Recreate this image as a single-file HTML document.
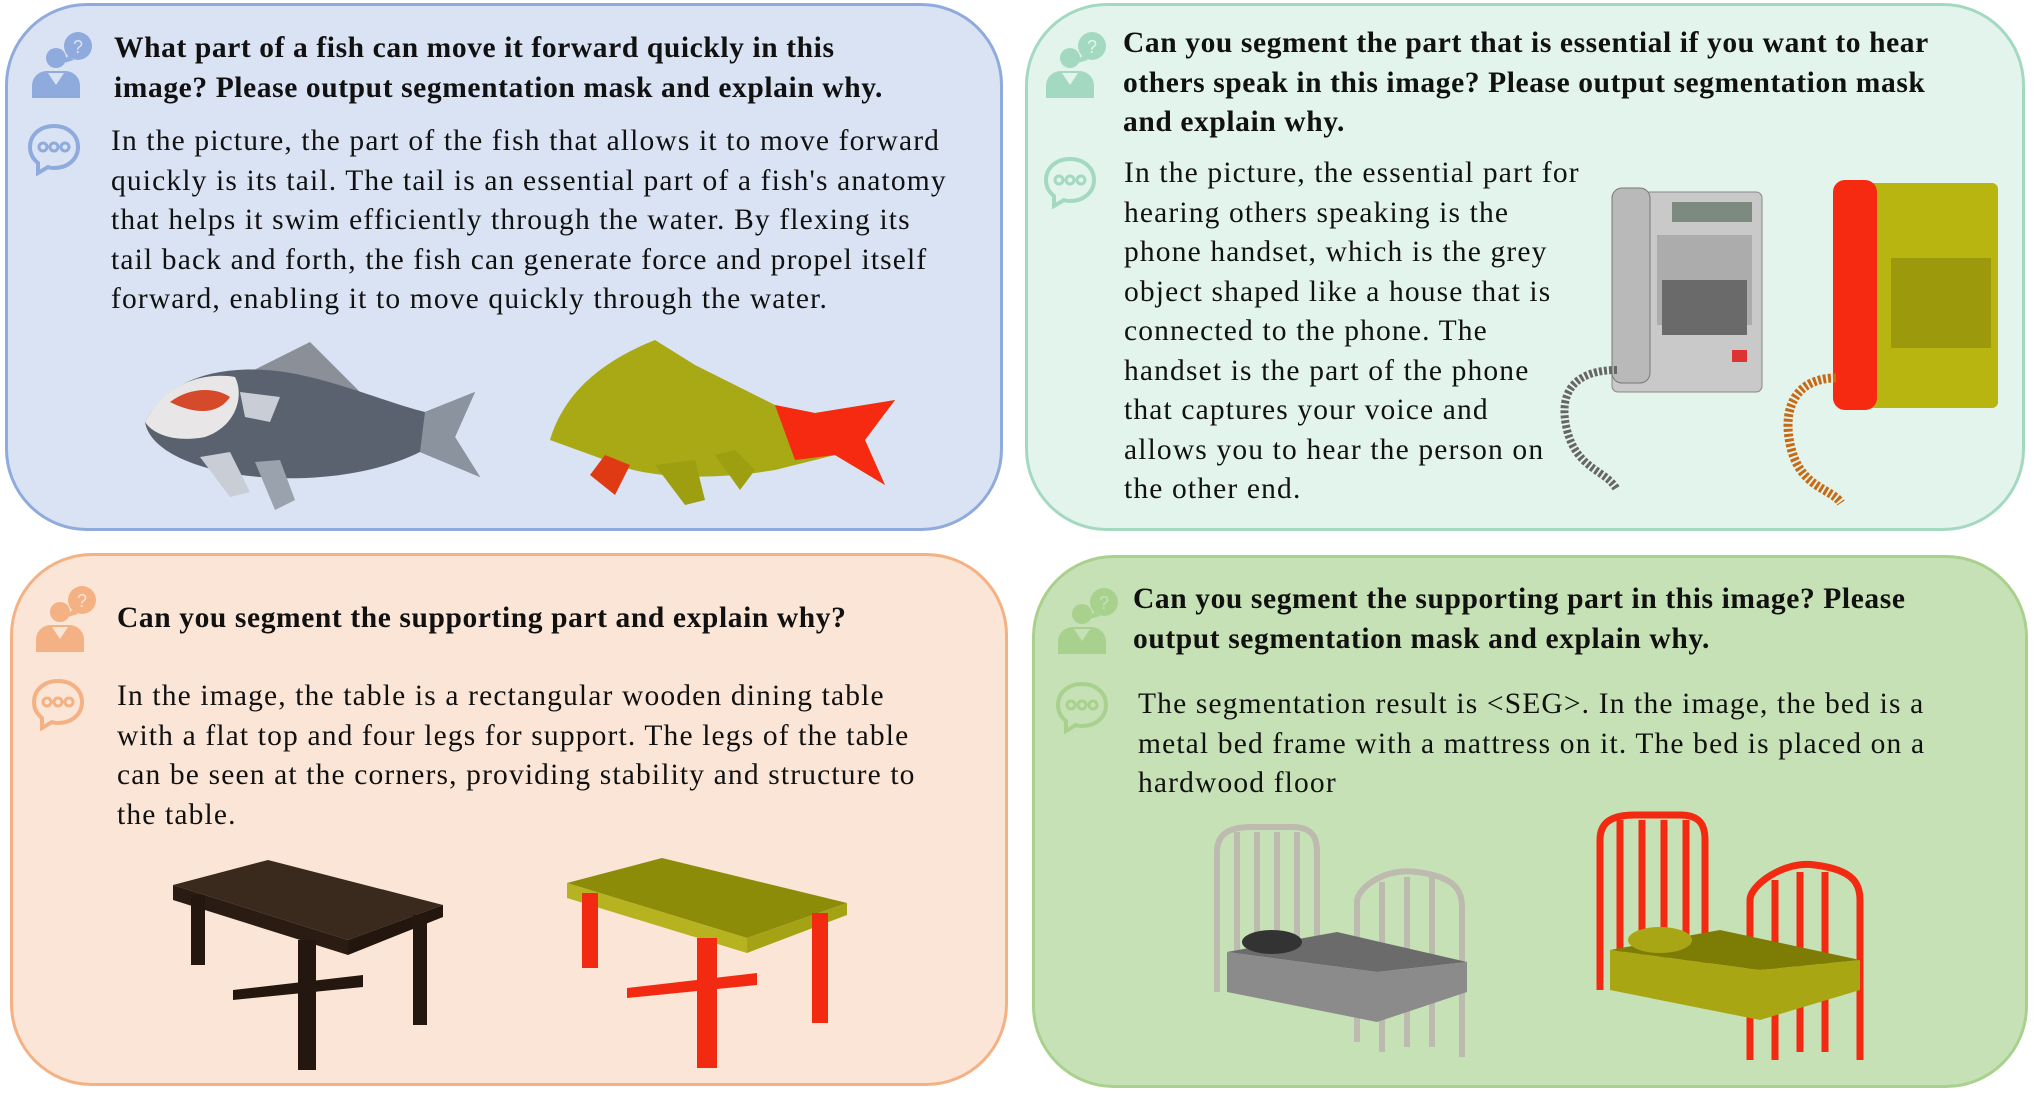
<!DOCTYPE html>
<html><head><meta charset="utf-8"><style>
*{margin:0;padding:0;box-sizing:border-box}
body{width:2035px;height:1093px;background:#fff;position:relative;overflow:hidden;font-family:"Liberation Serif","Times New Roman",serif;color:#111}
.p{position:absolute;border-radius:82px;border:3px solid}
.t{position:absolute;white-space:nowrap;font-size:29.5px;line-height:39.5px;letter-spacing:1.15px}
.b{font-weight:bold;letter-spacing:0.6px}
svg{position:absolute}
</style></head><body>
<div class="p" style="left:5px;top:3px;width:998px;height:528px;background:#dae3f3;border-color:#8faadc"></div>
<div class="p" style="left:1025px;top:3px;width:1000px;height:528px;background:#e3f4ec;border-color:#a3d9c0"></div>
<div class="p" style="left:10px;top:553px;width:998px;height:533px;background:#fbe5d6;border-color:#f4b183"></div>
<div class="p" style="left:1032px;top:555px;width:996px;height:533px;background:#c6e1b5;border-color:#a9d18e"></div>

<svg style="left:26px;top:28px" width="72" height="72" viewBox="0 0 72 72"><g fill="#8faadc"><circle cx="30" cy="30" r="10"/><path d="M6 70V58c0-9 7-15 15-15h18c8 0 15 6 15 15v12z"/><path d="M22 45l8 12 8-12" fill="#dae3f3"/><circle cx="52" cy="18" r="14"/><path d="M42 28l-8 8 14-4z"/></g><text x="52" y="25" font-size="18" fill="#dae3f3" text-anchor="middle" font-family="Liberation Sans">?</text></svg>
<svg style="left:26px;top:122px" width="56" height="54" viewBox="0 0 56 54"><path d="M28 4C14 4 4 13 4 25c0 7 3 12 8 16v10l10-6c2 1 4 1 6 1 14 0 24-9 24-21S42 4 28 4z" fill="none" stroke="#8faadc" stroke-width="4"/><g fill="none" stroke="#8faadc" stroke-width="3"><circle cx="17" cy="25" r="4"/><circle cx="28" cy="25" r="4"/><circle cx="39" cy="25" r="4"/></g></svg>

<svg style="left:1040px;top:28px" width="72" height="72" viewBox="0 0 72 72"><g fill="#a3d9c0"><circle cx="30" cy="30" r="10"/><path d="M6 70V58c0-9 7-15 15-15h18c8 0 15 6 15 15v12z"/><path d="M22 45l8 12 8-12" fill="#e3f4ec"/><circle cx="52" cy="18" r="14"/><path d="M42 28l-8 8 14-4z"/></g><text x="52" y="25" font-size="18" fill="#e3f4ec" text-anchor="middle" font-family="Liberation Sans">?</text></svg>
<svg style="left:1042px;top:155px" width="56" height="54" viewBox="0 0 56 54"><path d="M28 4C14 4 4 13 4 25c0 7 3 12 8 16v10l10-6c2 1 4 1 6 1 14 0 24-9 24-21S42 4 28 4z" fill="none" stroke="#a3d9c0" stroke-width="4"/><g fill="none" stroke="#a3d9c0" stroke-width="3"><circle cx="17" cy="25" r="4"/><circle cx="28" cy="25" r="4"/><circle cx="39" cy="25" r="4"/></g></svg>

<svg style="left:30px;top:582px" width="72" height="72" viewBox="0 0 72 72"><g fill="#f4b183"><circle cx="30" cy="30" r="10"/><path d="M6 70V58c0-9 7-15 15-15h18c8 0 15 6 15 15v12z"/><path d="M22 45l8 12 8-12" fill="#fbe5d6"/><circle cx="52" cy="18" r="14"/><path d="M42 28l-8 8 14-4z"/></g><text x="52" y="25" font-size="18" fill="#fbe5d6" text-anchor="middle" font-family="Liberation Sans">?</text></svg>
<svg style="left:30px;top:677px" width="56" height="54" viewBox="0 0 56 54"><path d="M28 4C14 4 4 13 4 25c0 7 3 12 8 16v10l10-6c2 1 4 1 6 1 14 0 24-9 24-21S42 4 28 4z" fill="none" stroke="#f4b183" stroke-width="4"/><g fill="none" stroke="#f4b183" stroke-width="3"><circle cx="17" cy="25" r="4"/><circle cx="28" cy="25" r="4"/><circle cx="39" cy="25" r="4"/></g></svg>

<svg style="left:1052px;top:584px" width="72" height="72" viewBox="0 0 72 72"><g fill="#a9d18e"><circle cx="30" cy="30" r="10"/><path d="M6 70V58c0-9 7-15 15-15h18c8 0 15 6 15 15v12z"/><path d="M22 45l8 12 8-12" fill="#c6e1b5"/><circle cx="52" cy="18" r="14"/><path d="M42 28l-8 8 14-4z"/></g><text x="52" y="25" font-size="18" fill="#c6e1b5" text-anchor="middle" font-family="Liberation Sans">?</text></svg>
<svg style="left:1054px;top:680px" width="56" height="54" viewBox="0 0 56 54"><path d="M28 4C14 4 4 13 4 25c0 7 3 12 8 16v10l10-6c2 1 4 1 6 1 14 0 24-9 24-21S42 4 28 4z" fill="none" stroke="#a9d18e" stroke-width="4"/><g fill="none" stroke="#a9d18e" stroke-width="3"><circle cx="17" cy="25" r="4"/><circle cx="28" cy="25" r="4"/><circle cx="39" cy="25" r="4"/></g></svg>

<div class="t b" style="left:114px;top:29px">What part of a fish can move it forward quickly in this<br>image? Please output segmentation mask and explain why.</div>
<div class="t" style="left:111px;top:122px">In the picture, the part of the fish that allows it to move forward<br>quickly is its tail. The tail is an essential part of a fish's anatomy<br>that helps it swim efficiently through the water. By flexing its<br>tail back and forth, the fish can generate force and propel itself<br>forward, enabling it to move quickly through the water.</div>

<div class="t b" style="left:1123px;top:24px">Can you segment the part that is essential if you want to hear<br>others speak in this image? Please output segmentation mask<br>and explain why.</div>
<div class="t" style="left:1124px;top:154px">In the picture, the essential part for<br>hearing others speaking is the<br>phone handset, which is the grey<br>object shaped like a house that is<br>connected to the phone. The<br>handset is the part of the phone<br>that captures your voice and<br>allows you to hear the person on<br>the other end.</div>

<div class="t b" style="left:117px;top:599px">Can you segment the supporting part and explain why?</div>
<div class="t" style="left:117px;top:677px">In the image, the table is a rectangular wooden dining table<br>with a flat top and four legs for support. The legs of the table<br>can be seen at the corners, providing stability and structure to<br>the table.</div>

<div class="t b" style="left:1133px;top:580px">Can you segment the supporting part in this image? Please<br>output segmentation mask and explain why.</div>
<div class="t" style="left:1138px;top:685px">The segmentation result is &lt;SEG&gt;. In the image, the bed is a<br>metal bed frame with a mattress on it. The bed is placed on a<br>hardwood floor</div>

<svg style="left:140px;top:332px" width="360" height="180" viewBox="0 0 360 180">
<path d="M110 40l60-30 50 50z" fill="#8a8f98"/>
<path d="M5 90c20-40 70-60 140-50 50 8 100 30 140 40l50-20-20 45 25 40-60-25c-40 20-100 30-160 25C60 140 10 120 5 90z" fill="#5a6270"/>
<path d="M5 90c20-40 60-50 90-45 10 20 0 50-30 60C40 110 15 105 5 90z" fill="#e8e6e6"/>
<path d="M30 70c20-15 45-15 60-5-10 15-30 20-60 5z" fill="#d44a2a"/>
<path d="M100 60l40 5-10 25-25-5z" fill="#c8cdd6"/>
<path d="M60 125l30 40 20-5-20-40z" fill="#c8cdd6"/><path d="M115 130l20 48 20-10-15-40z" fill="#9aa2ad"/>
<path d="M285 80l50-20-20 45 25 40-60-25z" fill="#8b939e"/>
</svg>
<svg style="left:545px;top:330px" width="360" height="175" viewBox="0 0 360 175">
<path d="M5 110C20 60 60 30 110 10l40 25 80 40 40 8 80-13-30 40 20 45-50-30-60 15c-60 10-130 10-170-10z" fill="#a8a915"/>
<path d="M230 75l40 8 80-13-30 40 20 45-50-30-40 5z" fill="#f52a10"/>
<path d="M60 125l-15 20 25 20 15-30z" fill="#e03a15"/>
<path d="M110 135l30 40 20-5-10-40z" fill="#9d9e10"/>
<path d="M170 125l25 35 15-20-20-20z" fill="#9d9e10"/>
</svg>
<svg style="left:1557px;top:180px" width="210" height="315" viewBox="0 0 210 315">
<rect x="55" y="12" width="150" height="200" rx="6" fill="#c9c9c9" stroke="#888"/>
<rect x="55" y="8" width="38" height="195" rx="10" fill="#b9b9b9" stroke="#777"/>
<rect x="115" y="22" width="80" height="20" fill="#7d8a80"/>
<g fill="#6a6a6a"><rect x="100" y="55" width="95" height="90" opacity=".3"/><rect x="105" y="100" width="85" height="55"/></g>
<rect x="175" y="170" width="15" height="12" fill="#d33"/>
<path d="M60 190c-40 0-60 20-50 60 10 40 40 40 50 60" fill="none" stroke="#666" stroke-width="8" stroke-dasharray="3 2"/>
</svg>
<svg style="left:1781px;top:178px" width="222" height="328" viewBox="0 0 222 328">
<rect x="55" y="5" width="162" height="225" rx="6" fill="#b8b410"/>
<rect x="52" y="2" width="44" height="230" rx="12" fill="#f62a10"/>
<g fill="#9c9a0c"><rect x="110" y="80" width="100" height="90"/></g>
<path d="M55 200c-40 0-55 30-45 70 10 40 40 40 50 55" fill="none" stroke="#c86a15" stroke-width="9" stroke-dasharray="3 2"/>
</svg>
<svg style="left:173px;top:860px" width="270" height="212" viewBox="0 0 270 212">
<path d="M0 25l95-25 175 45-95 35z" fill="#3a2a1e"/>
<path d="M0 25l175 55v15L0 40z" fill="#2a1c12"/><path d="M175 80l95-35v12l-95 38z" fill="#22160e"/>
<g fill="#23170f"><rect x="18" y="35" width="14" height="70"/><rect x="125" y="80" width="18" height="130"/><rect x="240" y="55" width="14" height="110"/><path d="M60 130l130-15v12L60 140z"/></g>
</svg>
<svg style="left:567px;top:858px" width="280" height="212" viewBox="0 0 280 212">
<path d="M0 25l95-25 185 45-100 35z" fill="#8d8c08"/>
<path d="M0 25l180 55v15L0 40z" fill="#b6b220"/><path d="M180 80l100-35v12l-100 38z" fill="#a5a315"/>
<g fill="#f22a12"><rect x="15" y="35" width="16" height="75"/><rect x="130" y="80" width="20" height="130"/><rect x="245" y="55" width="16" height="110"/><path d="M60 130l130-15v12L60 140z"/></g>
</svg>
<svg style="left:1207px;top:822px" width="276" height="258" viewBox="0 0 276 258">
<g fill="none" stroke="#bdbab0" stroke-width="6"><path d="M10 170V30c0-20 15-25 35-25h40c20 0 25 10 25 25v150"/><path d="M30 10v140M50 10v140M70 10v140M90 10v140"/><path d="M150 220V80c0-15 30-35 60-30 40 5 45 20 45 35v150"/><path d="M175 60v170M200 55v170M225 55v170"/></g>
<path d="M20 130l150 20 90-10-130-30z" fill="#6b6b6b"/><path d="M20 130v40l150 30 90-30v-30l-90 10z" fill="#8b8b8b"/>
<ellipse cx="65" cy="120" rx="30" ry="12" fill="#333"/>
</svg>
<svg style="left:1590px;top:810px" width="298" height="272" viewBox="0 0 298 272">
<g fill="none" stroke="#f22a12" stroke-width="7"><path d="M10 180V30c0-20 15-25 35-25h45c20 0 25 10 25 25v160"/><path d="M30 10v150M52 10v150M74 10v150M96 10v150"/><path d="M160 250V90c0-15 35-40 65-35 40 5 45 20 45 35v160"/><path d="M185 70v180M210 62v180M235 62v180"/></g>
<path d="M20 140l150 20 100-10-140-30z" fill="#7d7c05"/><path d="M20 140v40l150 30 100-30v-30l-100 10z" fill="#a8a612"/>
<ellipse cx="70" cy="130" rx="32" ry="13" fill="#a9a615"/>
</svg>
</body></html>
